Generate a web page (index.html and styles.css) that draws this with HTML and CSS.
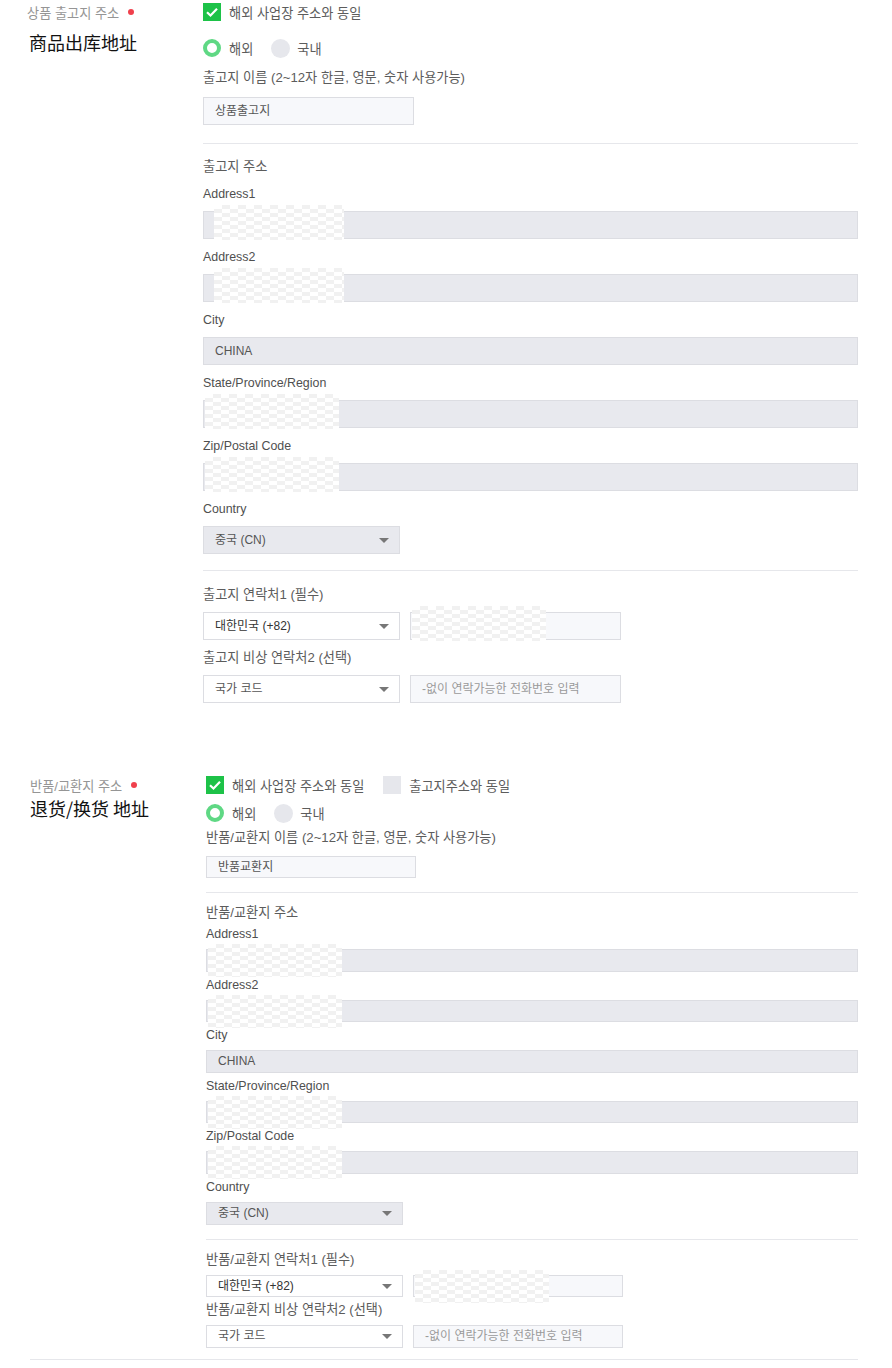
FILE: index.html
```html
<!DOCTYPE html>
<html>
<head lang="ko">
    <meta charset="UTF-8">
    <title>주소 설정</title>
    <link rel="stylesheet" href="styles.css">
</head>
<body>

<div class="section sec1">
    <div class="side">
        <div class="side-label">상품 출고지 주소<i class="req"></i></div>
        <div class="side-cn">商品出库地址</div>
    </div>
    <div class="main">
        <div class="check-row">
            <label class="check"><span class="box on"><svg width="18" height="18" viewBox="0 0 18 18"><polyline points="4,9.2 7.5,12.5 14,5.8" fill="none" stroke="#fff" stroke-width="2.2"/></svg></span>해외 사업장 주소와 동일</label>
        </div>
        <div class="radio-row">
            <span class="radio on"></span><span class="radio-text">해외</span>
            <span class="radio"></span><span class="radio-text">국내</span>
        </div>
        <div class="field name">
            <div class="label ko">출고지 이름 (2~12자 한글, 영문, 숫자 사용가능)</div>
            <div class="input light short">상품출고지</div>
        </div>
        <div class="divider"></div>
        <div class="subhead">출고지 주소</div>
        <div class="field">
            <div class="label">Address1</div>
            <div class="input off"><span class="mask"></span></div>
        </div>
        <div class="field">
            <div class="label">Address2</div>
            <div class="input off"><span class="mask"></span></div>
        </div>
        <div class="field">
            <div class="label">City</div>
            <div class="input off">CHINA</div>
        </div>
        <div class="field">
            <div class="label">State/Province/Region</div>
            <div class="input off"><span class="mask edge"></span></div>
        </div>
        <div class="field">
            <div class="label">Zip/Postal Code</div>
            <div class="input off"><span class="mask edge"></span></div>
        </div>
        <div class="field">
            <div class="label">Country</div>
            <div class="select off">중국 (CN)<i class="caret"></i></div>
        </div>
        <div class="divider gap"></div>
        <div class="field contact">
            <div class="label ko">출고지 연락처1 (필수)</div>
            <div class="phone-row">
                <div class="select dark">대한민국 (+82)<i class="caret"></i></div>
                <div class="input light short"><span class="mask edge"></span></div>
            </div>
        </div>
        <div class="field">
            <div class="label ko">출고지 비상 연락처2 (선택)</div>
            <div class="phone-row">
                <div class="select">국가 코드<i class="caret"></i></div>
                <div class="input light short hint">-없이 연락가능한 전화번호 입력</div>
            </div>
        </div>
    </div>
</div>

<div class="section sec2 compact">
    <div class="side">
        <div class="side-label">반품/교환지 주소<i class="req"></i></div>
        <div class="side-cn">退货/换货 地址</div>
    </div>
    <div class="main">
        <div class="check-row">
            <label class="check"><span class="box on"><svg width="18" height="18" viewBox="0 0 18 18"><polyline points="4,9.2 7.5,12.5 14,5.8" fill="none" stroke="#fff" stroke-width="2.2"/></svg></span>해외 사업장 주소와 동일</label>
            <label class="check"><span class="box"></span>출고지주소와 동일</label>
        </div>
        <div class="radio-row">
            <span class="radio on"></span><span class="radio-text">해외</span>
            <span class="radio"></span><span class="radio-text">국내</span>
        </div>
        <div class="field name">
            <div class="label ko">반품/교환지 이름 (2~12자 한글, 영문, 숫자 사용가능)</div>
            <div class="input light short">반품교환지</div>
        </div>
        <div class="divider"></div>
        <div class="subhead">반품/교환지 주소</div>
        <div class="field">
            <div class="label">Address1</div>
            <div class="input off"><span class="mask edge"></span></div>
        </div>
        <div class="field">
            <div class="label">Address2</div>
            <div class="input off"><span class="mask edge"></span></div>
        </div>
        <div class="field">
            <div class="label">City</div>
            <div class="input off">CHINA</div>
        </div>
        <div class="field">
            <div class="label">State/Province/Region</div>
            <div class="input off"><span class="mask edge"></span></div>
        </div>
        <div class="field">
            <div class="label">Zip/Postal Code</div>
            <div class="input off"><span class="mask edge"></span></div>
        </div>
        <div class="field">
            <div class="label">Country</div>
            <div class="select off">중국 (CN)<i class="caret"></i></div>
        </div>
        <div class="divider gap"></div>
        <div class="field contact">
            <div class="label ko">반품/교환지 연락처1 (필수)</div>
            <div class="phone-row">
                <div class="select dark">대한민국 (+82)<i class="caret"></i></div>
                <div class="input light short"><span class="mask edge"></span></div>
            </div>
        </div>
        <div class="field">
            <div class="label ko">반품/교환지 비상 연락처2 (선택)</div>
            <div class="phone-row">
                <div class="select">국가 코드<i class="caret"></i></div>
                <div class="input light short hint">-없이 연락가능한 전화번호 입력</div>
            </div>
        </div>
    </div>
</div>

</body>
</html>
```

FILE: styles.css
```css
body{
    margin: 0;
    background: #fff;
    font-family: "Liberation Sans", "Noto Sans CJK KR", sans-serif;
    font-size: 12px;
    color: #555;
}
.section{
    display: flex;
}
.sec1{
    padding-top: 3px;
}
.sec1 .side{
    width: 176px;
    padding-left: 27px;
}
.sec1 .main{
    width: 655px;
}
.sec2{
    margin: 73px 0 0 30px;
    width: 828px;
    padding-bottom: 11px;
    border-bottom: 1px solid #e6e7eb;
}
.sec2 .side{
    width: 176px;
}
.sec2 .main{
    width: 652px;
}

/* left column */
.side-label{
    display: flex;
    align-items: center;
    height: 18px;
    font-size: 13.2px;
    color: #959595;
}
.req{
    width: 6px;
    height: 6px;
    margin-left: 9px;
    border-radius: 50%;
    background: #f0404c;
}
.side-cn{
    margin-top: 9px;
    font-family: "Noto Sans CJK SC", sans-serif;
    font-size: 18px;
    line-height: 24px;
    color: #111;
}
.sec1 .side-cn{
    padding-left: 2px;
}
.compact .side-cn{
    margin-top: 2px;
}

/* checkbox + radio */
.check-row{
    display: flex;
    align-items: center;
    height: 18px;
    font-size: 13.2px;
    color: #5c5c5c;
}
.check{
    display: flex;
    align-items: center;
    margin-right: 19px;
}
.box{
    width: 18px;
    height: 18px;
    margin-right: 8px;
    background: #e6e7ec;
}
.box.on{
    background: #1dc248;
}
.box svg{
    display: block;
}
.radio-row{
    display: flex;
    align-items: center;
    height: 18px;
    margin-top: 18px;
    font-size: 13.2px;
    color: #5c5c5c;
}
.compact .radio-row{
    margin-top: 10px;
}
.radio{
    box-sizing: border-box;
    width: 19px;
    height: 19px;
    border-radius: 50%;
    background: #e6e7ec;
}
.radio.on{
    width: 18px;
    height: 18px;
    border: 4px solid #5fd884;
    background: #fff;
}
.radio-text{
    margin: 0 18px 0 8px;
}
.radio-text:last-child{
    margin-left: 7px;
}

/* fields */
.label{
    line-height: 18px;
    margin-bottom: 8px;
    font-size: 12.4px;
    color: #4f4f4f;
}
.label.ko,.subhead{
    font-size: 13.2px;
    color: #5c5c5c;
}
.field{
    margin-top: 9px;
}
.field.name{
    margin-top: 12px;
}
.field.name .label{
    margin-bottom: 10px;
}
.field.contact{
    margin-top: 15px;
}
.subhead{
    margin-top: 14px;
    line-height: 18px;
}
.divider{
    height: 1px;
    margin-top: 18px;
    background: #e6e7eb;
}
.divider.gap{
    margin-top: 16px;
}
.input,.select{
    position: relative;
    box-sizing: border-box;
    height: 28px;
    padding-left: 11px;
    line-height: 26px;
    border: 1px solid #dcdde2;
    color: #555;
}
.input.off,.select.off{
    background: #e8e9ee;
}
.input.light{
    background: #f7f8fb;
}
.input.short{
    width: 211px;
}
.input.hint{
    color: #9a9a9a;
}
.select{
    width: 197px;
    background: #fff;
}
.select.dark{
    color: #333;
}
.caret{
    position: absolute;
    right: 10px;
    top: 50%;
    margin-top: -2px;
    border-left: 5px solid transparent;
    border-right: 5px solid transparent;
    border-top: 5px solid #777;
}
.phone-row{
    display: flex;
    gap: 10px;
}

/* blurred value patch */
.mask{
    position: absolute;
    left: 10px;
    top: -7px;
    width: 130px;
    height: 35px;
    background: conic-gradient(#f1f1f1 25%, #fff 0 50%, #f1f1f1 0 75%, #fff 0) 0 0 / 16px 8px;
}
.mask.edge{
    left: 1px;
    width: 134px;
}

/* compact second block */
.compact .label{
    line-height: 16px;
    margin-bottom: 7px;
}
.compact .field{
    margin-top: 5px;
}
.compact .field.name{
    margin-top: 8px;
}
.compact .field.contact{
    margin-top: 12px;
}
.compact .input,.compact .select{
    height: 22.6px;
    line-height: 20.6px;
}
.compact .field.name .input{
    height: 22px;
}
.compact .input.short{
    width: 210px;
}
.compact .subhead{
    margin-top: 12px;
    line-height: 16px;
}
.compact .divider{
    margin-top: 14px;
}
.compact .mask{
    top: -6px;
    height: 33px;
}
```
